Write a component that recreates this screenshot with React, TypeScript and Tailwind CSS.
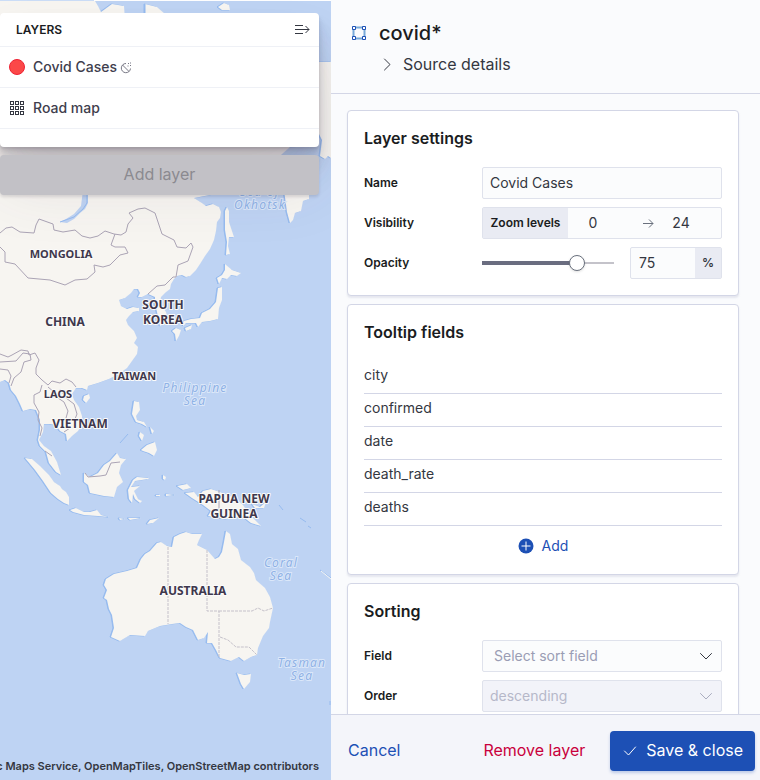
import { useState, type ReactNode } from "react";

const LAND = [
  // Asian mainland
  "M0 1H95L98 6 101 12 112 4 124 6 125 20H145V4L157 7 165 14 230 62H331V158L328 156 325 159 320 156 322 140 319 134 304 146 290 147 281 155 236 190 194 198 202 203 206 206 213 204 219 207 221 212 220 218 217 222 216 231 214 240 210 249 205 256 200 264 196 270 190 276 186 277 182 275 177 276 174 279 171 284 170 289 165 293 161 297 160 303 166 312 168 322 160 326 157 312 155 303 155 297 148 294 142 297 138 297 140 293 138 289 134 289 131 293 125 298 119 300 121 306 127 309 133 307 139 308 139 311 133 312 129 316 126 320 128 325 134 331 137 338 134 343 138 347 137 354 132 361 127 368 119 374 109 379 98 383 88 386 87 390 82 388 76 388 72 394 74 400 79 407 82 416 82 424 78 431 72 436 67 441 66 434 60 431 56 425 50 424 44 424 43 432 39 440 44 446 51 451 57 462 61 475 56 472 49 463 46 452 40 446 38 440 40 430 40 420 36 410 30 409 23 411 20 404 16 396 11 390 9 383 5 380 0 382Z",
  // Kamchatka and northern islands
  "M284 190H309V199L303 201 301 211 295 213 293 220 290 223 287 212Z",
  "M218 7 224 3 229 5 230 10 222 10Z",
  "M225 211 227 207 229 211 229 222 234 237 229 237 228 246 230 254 226 255 227 242 225 230Z",
  // Japan
  "M225 264 232 270 241 273 237 276 231 275 227 279 222 278 219 284 217 278 222 275 225 270Z",
  "M218 288 222 287 222 300 219 308 218 319 210 321 202 322 198 327 196 323 186 323 183 326 184 321 191 319 200 318 202 313 210 309 216 302Z",
  "M172 331 176 328 181 330 179 336 176 341 175 334Z",
  "M185 328 192 325 191 329 186 331Z",
  // Hainan and the Philippines
  "M84 396 89 394 90 398 86 403 83 400Z",
  "M134 401 139 402 140 410 136 416 137 420 144 422 147 427 142 424 136 422 132 414Z",
  "M140 432 144 435 142 441 139 436Z M150 427 154 431 152 434Z",
  "M141 450 147 445 155 442 157 450 154 456 149 453 143 451Z",
  // Indonesia
  "M25 458 32 459 40 466 49 475 54 482 60 486 62 489 66 492 69 497 69 505 64 503 58 499 51 493 43 481 35 470Z",
  "M70 510 76 508 84 512 90 512 97 510 101 515 109 517 98 516 84 515 73 512Z",
  "M84 473 90 477 98 473 104 465 110 461 117 453 120 458 126 459 121 465 119 473 123 482 117 487 114 497 104 496 90 493 88 485 84 482Z",
  "M133 480 137 477 149 478 148 479 135 481 131 487 140 486 134 491 138 499 142 501 140 503 135 499 133 494 132 503 129 499 128 490Z",
  "M163 475 166 477 165 480 163 479Z M156 495 160 495 160 496 156 496Z M166 494 175 495 166 496Z",
  "M119 518 125 519 120 520Z M128 518 141 518 130 520Z M147 524 150 520 159 518 153 523Z",
  // New Guinea
  "M177 486 187 484 191 488 183 490Z",
  "M185 493 194 492 198 497 203 491 211 489 220 492 235 498 243 505 249 514 259 524 261 526 251 523 242 516 226 519 214 517 208 516 211 511 203 505 192 498Z",
  "M252 504 260 507 266 502 264 508 255 508Z",
  // Australia and Tasmania
  "M173 542 174 537 180 534 186 532 192 534 202 534 199 540 197 545 207 550 215 559 219 557 222 552 224 542 226 531 230 534 232 544 238 549 241 560 250 567 254 573 256 580 265 588 270 597 273 608 270 622 269 628 263 636 258 648 257 655 251 657 244 661 239 657 231 661 220 658 216 650 212 643 207 643 208 632 204 638 198 640 193 630 186 627 180 623 172 624 160 626 148 631 145 636 130 635 120 641 111 637 114 628 112 615 109 609 107 600 104 598 107 590 104 585 106 579 114 574 127 571 137 568 141 559 145 554 150 551 157 543 161 542 167 546 172 547Z",
  "M237 673 244 675 251 674 250 682 244 689 241 684Z",
];

const BORDERS = [
  "M0 233 6 228 12 227 20 232 34 233 36 225 39 219 53 224 54 230 63 232 75 230 82 236 90 238 98 236 105 231 114 234 121 235 126 232 128 224 133 218 129 213 138 209 145 208 155 213 162 234 174 240 177 247 186 248 191 243 193 247 188 261 178 265 176 277 173 277 165 285 157 286 148 294",
  "M0 247 5 252 5 262 15 264 28 278 50 280 65 285 75 280 87 279 95 272 94 265 103 267 110 265 120 255 128 253 125 247 115 247 111 245 115 234",
  "M0 354 8 357 12 355 21 350 28 351 29 355 35 353 39 360 36 368 36 374 42 380 48 385 52 381 60 383 66 379 72 382 76 387",
  "M0 362 16 361 23 353 30 354 31 360 24 362 21 372 14 378 11 386M0 369 8 370 11 376 9 383",
  "M42 385 40 392 34 395 34 403 39 412 38 420 42 428 40 436M48 387 54 392 58 398 64 402 68 411 66 418M60 389 66 398 74 404 77 414 75 419M45 451 52 456M85 473 88 477 100 476 106 475 111 463 120 462M64 432 70 428",
  "M219 490V519",
];

const STATE_LINES = [
  "M168 547V624",
  "M207 550V611H219V657",
  "M219 611H252L258 608 264 611 273 608",
  "M220 637 228 640 236 647 249 647 257 655",
];

const LARGE_COUNTRIES = [
  { x: 65, y: 326, lines: ["CHINA"] },
  { x: 163, y: 309, lines: ["SOUTH", "KOREA"] },
  { x: 80, y: 428, lines: ["VIETNAM"] },
  { x: 234, y: 503, lines: ["PAPUA NEW", "GUINEA"] },
  { x: 193, y: 595, lines: ["AUSTRALIA"] },
];

const SMALL_COUNTRIES = [
  { x: 61, y: 258, lines: ["MONGOLIA"] },
  { x: 134, y: 380, lines: ["TAIWAN"] },
  { x: 58, y: 398, lines: ["LAOS"] },
];

const SEAS = [
  { x: 260, y: 196, lines: ["Sea of", "Okhotsk"] },
  { x: 195, y: 392, lines: ["Philippine", "Sea"] },
  { x: 281, y: 567, lines: ["Coral", "Sea"] },
  { x: 302, y: 667, lines: ["Tasman", "Sea"] },
];

type Place = { x: number; y: number; lines: string[] };

function PlaceNames({ places, pitch }: { places: Place[]; pitch: number }) {
  return places.map(({ x, y, lines }) => (
    <text key={lines[0]}>
      {lines.map((line, i) => (
        <tspan key={line} x={x} y={y + i * pitch}>
          {line}
        </tspan>
      ))}
    </text>
  ));
}

function WorldMap() {
  return (
    <svg
      className="absolute inset-0 size-full"
      viewBox="0 0 331 780"
      preserveAspectRatio="xMaxYMin slice"
      role="img"
      aria-label="Map"
    >
      <rect width="331" height="780" fill="#bed3f3" />
      <rect width="331" height="1" fill="#ffffff" />
      <g fill="#96bbef" stroke="#96bbef" strokeWidth="1" transform="translate(-1 0)">
        {LAND.map((d) => (
          <path key={d} d={d} />
        ))}
      </g>
      <g fill="#f7f5f1">
        {LAND.map((d) => (
          <path key={d} d={d} />
        ))}
      </g>
      <path d="M83 190H88V203L85 209 80 213 74 219 67 223 60 222 66 219 74 214 81 206Z" fill="#bed3f3" />
      <path d="M87 190V203L83 209 74 217 60 222" fill="none" stroke="#96bbef" />
      <path d="M145 4V13" stroke="#96bbef" />
      <path
        d="M120 443 128 434M279 505 283 510M300 518 306 522M308 526 311 528M320 570 331 578M330 701V705"
        fill="none"
        stroke="#96bbef"
      />
      <path d="M321 571 331 579" stroke="#f7f5f1" />
      <g fill="none" stroke="#aba4b5" strokeWidth="1" strokeLinejoin="round">
        {BORDERS.map((d) => (
          <path key={d} d={d} />
        ))}
      </g>
      <g fill="none" stroke="#c5c1ca" strokeWidth="1" strokeDasharray="3 1">
        {STATE_LINES.map((d) => (
          <path key={d} d={d} />
        ))}
      </g>
      <g
        className="font-['Noto_Sans',sans-serif] text-[12px] italic tracking-widest"
        fill="#8fb2e6"
        stroke="#dbe7f9"
        strokeWidth="2"
        paintOrder="stroke"
        textAnchor="middle"
      >
        <PlaceNames places={SEAS} pitch={13} />
      </g>
      <g
        className="font-['Noto_Sans',sans-serif] font-bold"
        fill="#3f384d"
        stroke="#fbfbfa"
        strokeWidth="2"
        strokeLinejoin="round"
        paintOrder="stroke"
        textAnchor="middle"
      >
        <g className="text-[12px]">
          <PlaceNames places={LARGE_COUNTRIES} pitch={15} />
        </g>
        <g className="text-[11px]">
          <PlaceNames places={SMALL_COUNTRIES} pitch={14} />
        </g>
      </g>
    </svg>
  );
}

function LayerControl() {
  return (
    <div className="relative mt-[13px] mr-3 flex flex-col gap-2">
      <section className="rounded bg-white pb-[18px] shadow-[0_40px_64px_rgba(65,60,80,0.1),0_24px_32px_rgba(65,60,80,0.1),0_16px_16px_rgba(65,60,80,0.1),0_8px_8px_rgba(65,60,80,0.1),0_4px_4px_rgba(65,60,80,0.1),0_2px_2px_rgba(65,60,80,0.1)]">
        <header className="flex h-[34px] items-center justify-between border-b border-[#eff1f6] pr-[9px] pl-4">
          <h2 className="text-xs font-semibold text-[#1a1c21]">LAYERS</h2>
          <button type="button" aria-label="Collapse layers panel">
            <svg className="size-4" viewBox="0 0 16 16" fill="none" stroke="#343741">
              <path d="M1 3.5h8M1 7.5h14M1 11.5h8M11.5 4 15 7.5 11.5 11" />
            </svg>
          </button>
        </header>
        <ul className="text-sm font-medium text-[#403e4d]">
          <li className="flex h-[41px] items-center gap-2 border-b border-[#eff1f6] pl-[9px]">
            <svg className="size-4" viewBox="0 0 16 16">
              <circle cx="8" cy="8" r="7.5" fill="#fb4848" stroke="#ee2233" />
            </svg>
            <button type="button" className="flex items-center gap-[3px]">
              Covid Cases
              <svg className="mt-[2px] size-3" viewBox="0 0 12 12" fill="none" stroke="#777784">
                <path d="M6 1.5A4.6 4.6 0 1 0 10.5 6.5M2.5 3 9 9.5" />
                <path d="M8 1.5h1M10 3.5h1M7.5 4h1M10 1h1" />
              </svg>
            </button>
          </li>
          <li className="flex h-[41px] items-center gap-2 border-b border-[#eff1f6] pl-[9px]">
            <svg className="size-4" viewBox="0 0 16 16" fill="none" stroke="#343741">
              {[1.5, 6.5, 11.5].map((y) =>
                [1.5, 6.5, 11.5].map((x) => <rect key={`${x}-${y}`} x={x} y={y} width="3" height="3" />),
              )}
            </svg>
            <button type="button">Road map</button>
          </li>
        </ul>
      </section>
      <button
        type="button"
        disabled
        className="h-10 rounded bg-[#c2c1c6] pb-[2px] text-base text-[#8b8a90] shadow-[0_2px_3px_rgba(60,50,70,0.15)]"
      >
        Add layer
      </button>
    </div>
  );
}

function Card({ title, children }: { title: string; children: ReactNode }) {
  return (
    <section className="rounded border border-[#d3d6e6] bg-white p-4 shadow-[0_2px_2px_rgba(150,155,185,0.2)]">
      <h2 className="mb-[18px] text-base leading-[22px] font-semibold text-[#1a1c21]">{title}</h2>
      {children}
    </section>
  );
}

function Row({ label, htmlFor, children }: { label: string; htmlFor: string; children: ReactNode }) {
  return (
    <div className="flex h-8 items-center">
      <label htmlFor={htmlFor} className="w-[118px] shrink-0 text-xs font-semibold text-[#1a1c21]">
        {label}
      </label>
      <div className="flex min-w-0 flex-1 items-center">{children}</div>
    </div>
  );
}

const FIELD = "h-8 rounded-xs border border-[#dfe2ec] bg-[#fbfcfd] text-sm text-[#343741]";

function Chevron({ className }: { className: string }) {
  return (
    <svg
      className={`pointer-events-none col-start-1 row-start-1 mr-2 size-4 self-center justify-self-end ${className}`}
      viewBox="0 0 16 16"
      fill="none"
      stroke="currentColor"
      strokeLinecap="round"
      strokeLinejoin="round"
    >
      <path d="M2.5 5.5 8 11l5.5-5.5" />
    </svg>
  );
}

function LayerSettings() {
  const [opacity, setOpacity] = useState(75);
  return (
    <Card title="Layer settings">
      <div className="flex flex-col gap-2">
        <Row label="Name" htmlFor="name">
          <input id="name" className={`${FIELD} w-full px-[7px] pb-[2px]`} defaultValue="Covid Cases" />
        </Row>
        <Row label="Visibility" htmlFor="min-zoom">
          <div className={`${FIELD} flex w-full items-center`}>
            <span className="flex h-full w-[85px] items-center justify-center bg-[#e9ebf3] text-xs font-semibold text-[#1a1c21]">
              Zoom levels
            </span>
            <input id="min-zoom" inputMode="numeric" className="w-[50px] bg-transparent text-center" defaultValue="0" />
            <svg className="ml-auto size-4" viewBox="0 0 16 16" fill="none" stroke="#69707d" aria-hidden="true">
              <path d="M3 8.5h10M9 4.5l4 4-4 4" />
            </svg>
            <input
              aria-label="Maximum zoom"
              inputMode="numeric"
              className="mr-[15px] w-[50px] bg-transparent text-center"
              defaultValue="24"
            />
          </div>
        </Row>
        <Row label="Opacity" htmlFor="opacity">
          <input
            id="opacity"
            type="range"
            value={opacity}
            onChange={(e) => setOpacity(Number(e.target.value))}
            className="mr-4 h-4 min-w-0 flex-1 appearance-none bg-[linear-gradient(#6a6d80,#6a6d80),linear-gradient(#c4c3ca,#c4c3ca)] bg-left bg-no-repeat [&::-webkit-slider-thumb]:size-4 [&::-webkit-slider-thumb]:appearance-none [&::-webkit-slider-thumb]:rounded-full [&::-webkit-slider-thumb]:border [&::-webkit-slider-thumb]:border-[#69707d] [&::-webkit-slider-thumb]:bg-white [&::-webkit-slider-thumb]:shadow-sm"
            style={{ backgroundSize: `${opacity}% 4px, 100% 2px` }}
          />
          <div className={`${FIELD} flex w-[92px]`}>
            <input
              aria-label="Opacity percentage"
              inputMode="numeric"
              className="min-w-0 flex-1 bg-transparent pl-2"
              value={opacity}
              onChange={(e) => setOpacity(Number(e.target.value) || 0)}
            />
            <span className="flex w-[26px] items-center justify-center bg-[#e9ebf3] text-xs font-semibold text-[#343741]">
              %
            </span>
          </div>
        </Row>
      </div>
    </Card>
  );
}

function TooltipFields() {
  return (
    <Card title="Tooltip fields">
      <ul className="text-sm text-[#343741]">
        {["city", "confirmed", "date", "death_rate", "deaths"].map((field) => (
          <li key={field} className="border-b border-[#d3d6e6] pt-1 pb-2">
            {field}
          </li>
        ))}
      </ul>
      <button type="button" className="mx-auto mt-2 flex h-6 items-center gap-2 text-sm text-[#1d50b5]">
        <svg className="size-4" viewBox="0 0 16 16">
          <circle cx="8" cy="8" r="7.5" fill="#1d50b5" />
          <path d="M3.5 8h9M8 3.5v9" stroke="#ffffff" />
        </svg>
        Add
      </button>
    </Card>
  );
}

function Sorting() {
  return (
    <Card title="Sorting">
      <div className="flex flex-col gap-2">
        <Row label="Field" htmlFor="sort-field">
          <div className="grid w-full">
            <select
              id="sort-field"
              className="col-start-1 row-start-1 h-8 appearance-none rounded-xs border border-[#dfe2ec] bg-[#fbfcfd] px-[11px] text-sm text-[#9a9db4]"
            >
              <option>Select sort field</option>
            </select>
            <Chevron className="text-[#343741]" />
          </div>
        </Row>
        <Row label="Order" htmlFor="sort-order">
          <div className="grid w-full">
            <select
              id="sort-order"
              disabled
              className="col-start-1 row-start-1 h-8 appearance-none rounded-xs border border-[#dfe2ec] bg-[#f2f3f9] px-[7px] text-sm text-[#b6b8c9] opacity-100"
            >
              <option>descending</option>
            </select>
            <Chevron className="text-[#a9acbf]" />
          </div>
        </Row>
      </div>
    </Card>
  );
}

export default function App() {
  return (
    <div className="flex h-screen overflow-hidden bg-white font-['Inter',sans-serif] text-[#343741]">
      <main className="relative flex min-w-0 flex-1 flex-col justify-between overflow-hidden">
        <WorldMap />
        <LayerControl />
        <p className="relative mr-3 mb-[6px] flex justify-end text-[11px] leading-4 font-semibold whitespace-nowrap text-[#343741]">
          Elastic Maps Service, OpenMapTiles, OpenStreetMap contributors
        </p>
      </main>
      <aside className="flex w-[429px] shrink-0 flex-col bg-[#fafbfd]">
        <header className="flex h-[94px] shrink-0 gap-3 border-b border-[#d3d6e6] pt-5 pl-5">
          <svg className="mt-[5px] size-4" viewBox="0 0 16 16" fill="none">
            <path d="M4 2.5h8M4 13.5h8M2.5 4v8M13.5 4v8" stroke="#79aad9" strokeWidth="2" />
            <path
              d="M1.5 1.5h3v3h-3zM11.5 1.5h3v3h-3zM1.5 11.5h3v3h-3zM11.5 11.5h3v3h-3z"
              fill="#ffffff"
              stroke="#1d50b5"
            />
          </svg>
          <div>
            <h1 className="text-xl leading-[26px] font-medium text-[#1a1c21]">covid*</h1>
            <button type="button" className="mt-[6px] flex items-center gap-2 text-base">
              <svg
                className="size-4"
                viewBox="0 0 16 16"
                fill="none"
                stroke="#343741"
                strokeLinecap="round"
                strokeLinejoin="round"
              >
                <path d="m5.5 3 5.500 5.500L5.500 14" />
              </svg>
              Source details
            </button>
          </div>
        </header>
        <div className="flex min-h-0 flex-1 flex-col gap-2 overflow-hidden pt-4 pr-[21px] pl-4 *:shrink-0">
          <LayerSettings />
          <TooltipFields />
          <Sorting />
        </div>
        <footer className="flex shrink-0 items-center border-t border-[#d3d6e6] bg-[#f4f5fa] pt-4 pr-[5px] pb-[9px] pl-[17px]">
          <button type="button" className="pb-[2px] text-base text-[#1d50b5]">
            Cancel
          </button>
          <button type="button" className="mr-[25px] ml-auto pb-[2px] text-base text-[#c9003c]">
            Remove layer
          </button>
          <button
            type="button"
            className="flex h-10 items-center gap-2 rounded bg-[#1d50b5] px-3 pb-[2px] text-base text-white shadow-[0_2px_3px_rgba(29,80,181,0.25)]"
          >
            <svg
              className="size-4"
              viewBox="0 0 16 16"
              fill="none"
              stroke="currentColor"
              strokeLinecap="round"
              strokeLinejoin="round"
            >
              <path d="m2.500 9 4 4 7-8" />
            </svg>
            Save &amp; close
          </button>
        </footer>
      </aside>
    </div>
  );
}
